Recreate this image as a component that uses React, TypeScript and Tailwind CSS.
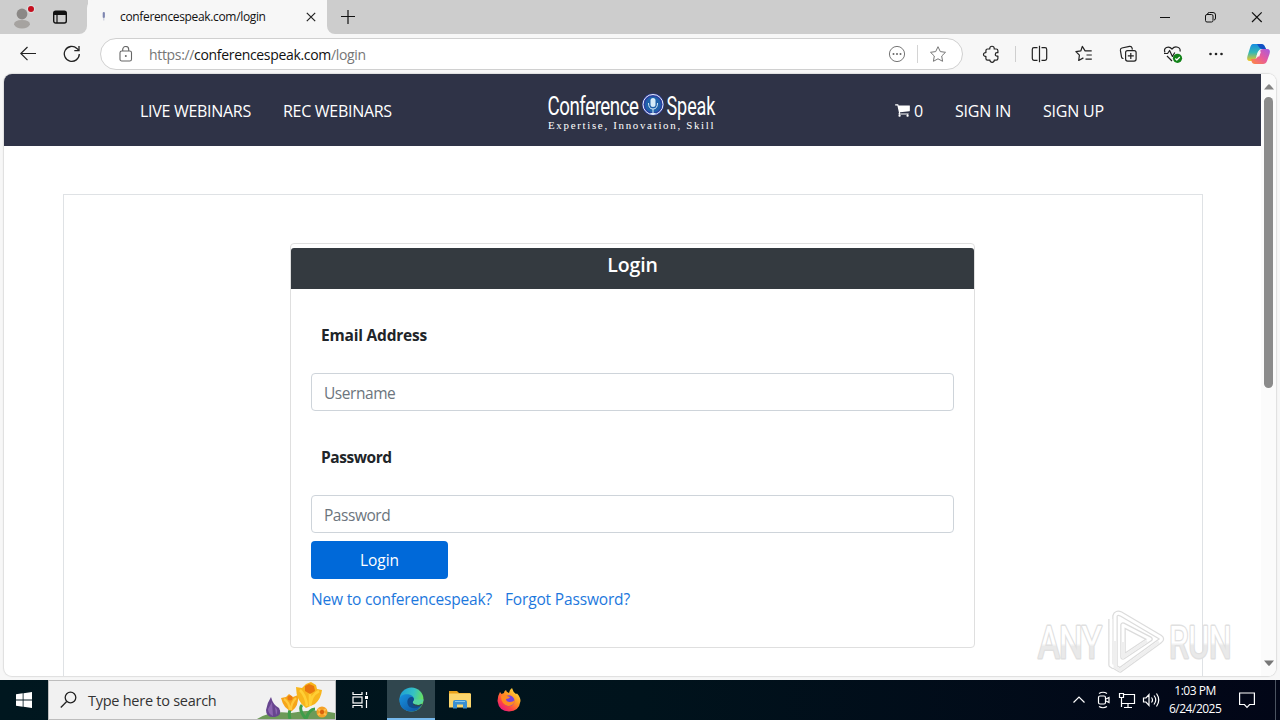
import React from 'react';

/** Browser tab strip with the window controls */
const TabStrip: React.FC = () => (
  <div className="flex h-[34px] shrink-0 bg-[#f7f7f7]">
    <div className="flex w-[87px] items-center rounded-br-lg bg-[#cdcdcd] pl-3">
      <svg className="h-7 w-6" viewBox="0 0 24 28" aria-hidden="true">
        <circle cx="10" cy="11" r="5.4" fill="#8b8886" />
        <path d="M2 21.500q0-4.500 8-4.500t8 4.500q-2 4-8 4t-8-4z" fill="#a6a3a0" />
        <circle cx="19" cy="6" r="4.200" fill="#dcdcdc" />
        <circle cx="19" cy="6" r="3" fill="#c50f1f" />
      </svg>
      <svg className="ml-4 h-4 w-4" viewBox="0 0 16 16" fill="none" stroke="#111" aria-hidden="true">
        <rect x="1.700" y="2.200" width="12.600" height="11.800" rx="2" strokeWidth="1.400" />
        <path d="M2 3h12v3H2z" fill="#111" stroke="none" />
        <path d="M5 5v9" strokeWidth="1.200" />
      </svg>
    </div>
    <div className="w-px bg-[#cdcdcd]" />
    <div className="-mx-px flex w-[241px] items-center rounded-t-lg bg-[#f7f7f7] pl-[14px]">
      <svg className="h-4 w-4" viewBox="0 0 16 16" aria-hidden="true">
        <rect x="1.700" y="3" width="2.200" height="6" rx="1.100" fill="#7e86b0" />
        <path d="M2.800 9v2.500" stroke="#c3c6d8" />
      </svg>
      <span className="ml-[3px] w-[186px] whitespace-nowrap text-[12px] tracking-[-0.34px] text-[#111]">conferencespeak.com/login</span>
      <svg className="h-[10px] w-[10px]" viewBox="0 0 10 10" stroke="#222" strokeWidth="1.200" aria-hidden="true">
        <path d="M.8 .8l8.400 8.400M9.200 .8L.8 9.200" />
      </svg>
    </div>
    <div className="flex flex-1 items-center rounded-bl-lg bg-[#cdcdcd] pl-[13px]">
      <svg className="h-4 w-4" viewBox="0 0 16 16" stroke="#111" strokeWidth="1.200" aria-hidden="true">
        <path d="M1 7.500h14M8 1v14" />
      </svg>
      <svg className="ml-auto h-[14px] w-[110px]" viewBox="0 0 110 14" fill="none" stroke="#111" aria-hidden="true">
        <path d="M3 7.500h10" />
        <rect x="48.500" y="4.500" width="7.500" height="7.500" rx="1.500" />
        <path d="M50.500 4.200q0-1.700 2-1.700h3.500q2.500 0 2.500 2.500v3q0 2-1.500 2" />
        <path d="M95 2.300l9.700 9.700M104.700 2.300L95 12" strokeWidth="1.200" />
      </svg>
      <div className="w-[13px]" />
    </div>
  </div>
);

const Toolbar: React.FC = () => (
  <div className="flex h-10 shrink-0 items-center bg-[#f7f7f7]">
    <svg className="ml-5 h-4 w-4" viewBox="0 0 16 16" fill="none" stroke="#222" strokeWidth="1.200" aria-hidden="true">
      <path d="M16 7.500H.8M7.500 1L.8 7.500l6.700 6.600" />
    </svg>
    <svg className="ml-[27px] h-[18px] w-[18px]" viewBox="0 0 18 18" fill="none" stroke="#222" strokeWidth="1.300" aria-hidden="true">
      <path d="M16.300 9A7.500 7.500 0 1 1 13.900 3.400L16 5.500" />
      <path d="M16 1v4.700h-4.700" />
    </svg>
    <div className="ml-[19px] flex h-8 w-[863px] items-center rounded-full border border-[#d0d0d0] bg-white">
      <svg className="ml-[18px] h-4 w-[14px]" viewBox="0 0 14 16" fill="none" stroke="#666" strokeWidth="1.100" aria-hidden="true">
        <rect x="1" y="5" width="11.500" height="10" rx="1.800" />
        <path d="M3.700 5V3.500a3 3 0 0 1 6 0V5" />
        <circle cx="6.800" cy="10" r="1" fill="#666" stroke="none" />
      </svg>
      <span className="ml-4 w-[700px] whitespace-nowrap text-[14px] tracking-[-0.33px] text-[#767676]">
        https://<span className="text-[#111]">conferencespeak.com</span>/login
      </span>
      <svg className="ml-[39px] h-[18px] w-[60px]" viewBox="0 0 60 18" fill="none" stroke="#777" aria-hidden="true">
        <circle cx="9" cy="9" r="7.600" />
        <g fill="#666" stroke="none">
          <circle cx="5.500" cy="9" r="1" />
          <circle cx="9" cy="9" r="1" />
          <circle cx="12.500" cy="9" r="1" />
        </g>
        <path d="M29.500 0v18" stroke="#d4d4d4" />
        <path d="M50 1.700l2.300 4.900 5.200.700-3.800 3.700.9 5.300-4.600-2.500-4.600 2.500.9-5.300-3.800-3.700 5.200-.700z" strokeLinejoin="round" />
      </svg>
    </div>
    <svg className="ml-[17px] h-6 w-[300px] shrink-0" viewBox="0 0 300 24" fill="none" stroke="#222" strokeWidth="1.200" strokeLinejoin="round" aria-hidden="true">
      {/* Extensions */}
      <path d="M7.500 7h2.300c-.6-3.700 5-3.700 4.400 0h2q1.700 0 1.700 1.700v2h-.9a1.700 1.700 0 0 0 0 3.400h.9v2.400q0 1.700-1.700 1.700h-2c.2 2.800-4.300 2.800-4.200 0H7.500q-1.600 0-1.600-1.700v-2.200c-3.200.6-3.200-4.200 0-3.600v-2Q5.900 7 7.500 7z" />
      <path d="M35.500 4v16" stroke="#cfcfcf" strokeWidth="1" />
      {/* Split screen */}
      <path d="M57.500 5.700H54q-1.700 0-1.700 1.700v9.200q0 1.700 1.700 1.700h3.500M61.500 5.700H65q1.700 0 1.700 1.700v9.200q0 1.700-1.700 1.700h-3.500M59.500 3.800v16.400" />
      {/* Favorites */}
      <path d="M111.700 8.900h-6.600L102.300 4.400l-1.400 4.400-5 .8 3.500 3.600-.7 5.300 4.700-2.600M106.500 13h5.300M105.500 17.200h6.300" />
      {/* Collections */}
      <path d="M143.500 16.500h-.5q-1.300-.3-1.500-1.700l-1.100-6.400q-.2-2 1.500-2.400l7.600-1.600q2-.3 2.500 1.500l.4 1.700" />
      <rect x="145.600" y="8.600" width="10.500" height="10.500" rx="2" />
      <path d="M147.800 13.900h6M150.800 10.900v6" />
      {/* Browser essentials */}
      <path d="M185 10.500c-2-4.500 3.500-7.500 7-3.500 3.500-4 9-1.500 8 2.500M187 14l5 5M184 11.500h3.600l2-3 2.800 6 2.400-4" />
      <circle cx="197.500" cy="16.300" r="4.600" fill="#13831a" stroke="none" />
      <path d="M195.300 16.500l1.500 1.500 3-3" stroke="#fff" />
      <g fill="#222" stroke="none">
        <circle cx="230.500" cy="12" r="1.300" />
        <circle cx="236" cy="12" r="1.300" />
        <circle cx="241.500" cy="12" r="1.300" />
      </g>
      {/* Copilot */}
      <defs>
        <linearGradient id="copilotCool" x1="0" y1="0" x2="0" y2="1">
          <stop offset="0" stopColor="#168de2" />
          <stop offset=".5" stopColor="#35b8b4" />
          <stop offset="1" stopColor="#f2c720" />
        </linearGradient>
        <linearGradient id="copilotWarm" x1="1" y1="0" x2="0" y2="1">
          <stop offset="0" stopColor="#a55ae2" />
          <stop offset=".5" stopColor="#e85b9b" />
          <stop offset="1" stopColor="#ff8a3c" />
        </linearGradient>
      </defs>
      <g stroke="none">
        <path d="M273 2h8q3 0 4 3l1 2h-4q-3 0-4 3l-2 6q-1 3-3 3h-3q-4 0-2.500-5l2.500-8q1-4 3-4z" fill="url(#copilotCool)" />
        <path d="M277 2h4q3 0 4 3l1 2h-4q-2 0-3-2z" fill="#1350c4" />
        <path d="M283 22h-8q-3 0-3.500-3l-.500-2h3q3 0 4-3l2-5q1-2 3-2h4q4 0 2.500 5l-2.500 7q-1 3-4 3z" fill="url(#copilotWarm)" />
        <path d="M278 9.500h3l-1.700 5h-3z" fill="#f7f7f7" />
      </g>
    </svg>
  </div>
);

const Logo: React.FC = () => (
  <svg className="h-11 w-[172px]" viewBox="0 -2 172 44" fill="#fff" role="img" aria-label="Conference Speak">
    <g className="font-['Roboto',sans-serif] text-[25px]">
      <text transform="translate(1.500 24.500) scale(.75 1)" textLength="122">Conference</text>
      <text transform="translate(120.500 24.500) scale(.72 1)" textLength="68">Speak</text>
    </g>
    <circle cx="107" cy="14.500" r="11" fill="#2b3fa0" />
    <circle cx="107" cy="14.500" r="10" fill="none" stroke="#fff" strokeWidth=".9" />
    <circle cx="107" cy="14.500" r="8" fill="#1f62aa" />
    <rect x="104.500" y="8" width="5" height="9" rx="2.500" fill="#d6ecf8" />
    <path d="M102.500 13q0 6 4.500 6t4.500-6M107 19v4M104.500 23.500h5" fill="none" stroke="#d6ecf8" />
    <text transform="translate(2 39) scale(1.150 1)" textLength="144" className="font-['Liberation_Serif',serif] text-[9.500px]">Expertise, Innovation, Skill</text>
  </svg>
);

const SiteNav: React.FC = () => (
  <nav className="flex h-[72px] shrink-0 items-center bg-[#2f3347] pl-[136px] text-[16px] whitespace-nowrap text-white">
    <a className="w-[143px] pt-[2px] tracking-[-0.29px]">LIVE WEBINARS</a>
    <a className="w-[263px] pt-[2px] tracking-[-0.29px]">REC WEBINARS</a>
    <Logo />
    <a className="ml-[177px] flex w-[60px] items-center">
      <svg className="h-4 w-4" viewBox="0 0 1792 1792" fill="currentColor" aria-hidden="true">
        <path d="M640 1536q0 52-38 90t-90 38-90-38-38-90 38-90 90-38 90 38 38 90zm896 0q0 52-38 90t-90 38-90-38-38-90 38-90 90-38 90 38 38 90zm128-1088v512q0 24-16.500 42.500t-40.500 21.500l-1044 122q13 60 13 70 0 16-24 64h920q26 0 45 19t19 45-19 45-45 19h-1024q-26 0-45-19t-19-45q0-11 8-31.500t16-36 21.500-40 15.500-29.500l-177-823h-204q-26 0-45-19t-19-45 19-45 45-19h256q16 0 28.500 6.500t19.500 15.500 13 24.500 8 26 5.500 29.500 4.500 26h1201q26 0 45 19t19 45z" />
      </svg>
      <span className="ml-[3px] pt-[2px]">0</span>
    </a>
    <a className="w-[88px] pt-[2px] tracking-[-0.22px]">SIGN IN</a>
    <a className="pt-[2px] tracking-[-0.22px]">SIGN UP</a>
  </nav>
);

const LoginCard: React.FC = () => (
  <div className="mt-12 ml-[226px] h-[405px] w-[685px] rounded border border-[#dfdfdf] pt-1 whitespace-nowrap">
    <h1 className="h-[41px] rounded-t-[3px] bg-[#343a40] pt-[3px] text-center text-[19.5px] leading-7 font-semibold tracking-[-0.1px] text-white">Login</h1>
    <form className="flex flex-col items-start px-5 text-[15.5px]">
      <label className="mt-[34px] ml-[10px] h-6 leading-6 font-bold tracking-[-0.2px] text-[#212529]">Email Address</label>
      <input className="mt-[26px] h-[38px] w-[643px] rounded border border-[#ced4da] px-3 pt-[2px] tracking-[-0.45px] placeholder:text-[#6c757d]" placeholder="Username" />
      <label className="mt-[34px] ml-[10px] h-6 leading-6 font-bold tracking-[-0.45px] text-[#212529]">Password</label>
      <input className="mt-[26px] h-[38px] w-[643px] rounded border border-[#ced4da] px-3 pt-[2px] tracking-[-0.45px] placeholder:text-[#6c757d]" placeholder="Password" />
      <button type="button" className="mt-2 h-[38px] w-[137px] rounded bg-[#0069d9] pt-px text-white">Login</button>
      <div className="mt-2 flex leading-6 text-[#1d78dd]">
        <a className="w-[194px] tracking-[-0.18px]">New to conferencespeak?</a>
        <a className="tracking-[-0.16px]">Forgot Password?</a>
      </div>
    </form>
  </div>
);

const Watermark: React.FC = () => (
  <svg className="absolute top-[604px] left-[1030px] h-[72px] w-[210px]" viewBox="0 0 210 72" aria-hidden="true">
    <defs>
      <linearGradient id="markFill" x1="0" y1="0" x2="0" y2="1">
        <stop offset=".5" stopColor="#fff" />
        <stop offset=".56" stopColor="#e9e9e9" />
      </linearGradient>
    </defs>
    <g fill="url(#markFill)" stroke="#e0e0e0" strokeWidth="3" strokeLinejoin="round" paintOrder="stroke" className="font-['Roboto',sans-serif] text-[44px]">
      <text transform="translate(8 54) scale(.76 1)" textLength="84">ANY</text>
      <text transform="translate(139 54) scale(.72 1)" textLength="87">RUN</text>
    </g>
    <g fill="none" strokeLinejoin="round">
      <path d="M81 15v46l3 2M91 10l39 23q3 2 0 4L90 66l-5-3V12q1-4 6-2zM93 21v32l27-18z" stroke="#dcdcdc" strokeWidth="5.500" />
      <path d="M81 15v46l3 2M91 10l39 23q3 2 0 4L90 66l-5-3V12q1-4 6-2zM93 21v32l27-18z" stroke="#fff" strokeWidth="3" />
      <path d="M129 38L90 66l-5-3V37M93 38v15l24-16" stroke="#efefef" strokeWidth="3" />
    </g>
  </svg>
);

const Page: React.FC = () => (
  <div className="mx-1 mb-1 flex h-[602px] shrink-0 overflow-hidden rounded-lg bg-white shadow-[0_0_1px_1px_#dedede]">
    <main className="flex w-[1257px] shrink-0 flex-col">
      <SiteNav />
      <div className="mt-12 ml-[59px] h-[482px] w-[1140px] border border-b-0 border-[#dfe2e5]">
        <LoginCard />
      </div>
    </main>
    <div className="flex flex-1 flex-col items-center bg-[#fbfbfb] pt-[10px] pb-[10px]">
      <svg className="h-[6px] w-[10px]" viewBox="0 0 10 6" fill="#858585" aria-hidden="true"><path d="M0 5.500L4 .8q1-1 2 0l4 4.700z" /></svg>
      <div className="mt-[7px] h-[291px] w-[9px] rounded-full bg-[#8b8b8b]" />
      <svg className="mt-auto h-[6px] w-[10px]" viewBox="0 0 10 6" fill="#777" aria-hidden="true"><path d="M0 .5h10L6 5.200q-1 1-2 0z" /></svg>
    </div>
  </div>
);

/** Crocuses in the taskbar search box */
const Flowers: React.FC = () => (
  <svg className="ml-auto h-[38px] w-[78px]" viewBox="0 0 78 38" aria-hidden="true">
    <path d="M0 38q14-9 34-6 24-5 44 0v6z" fill="#6d9a58" />
    <path d="M33 38q-2-7 1-10M49 38q-8-10-4-14M49 38q3-10 9-10" stroke="#3f9d4a" strokeWidth="3" fill="none" />
    <path d="M14 16q2 8 8 11 4 7-4 9-9 1-9-7 1-7 5-13z" fill="#67458f" />
    <path d="M15 21l1 14q-5-2-5-7zM18 26q4 3 1 8" fill="#8b65b0" />
    <path d="M24 17l5-1 3-3 4 3 5-2q1 11-6 16-8-1-11-13z" fill="#f6a51a" />
    <path d="M27 18q5 3 6 11M39 17q-5 5-5 12" stroke="#ffc93d" strokeWidth="2.200" fill="none" />
    <circle cx="33" cy="17" r="2.500" fill="#ed7b12" />
    <g transform="translate(-1 0)">
      <path d="M40 6l6 1 4-4 5-2 5 3 1 4 5 1q-1 9-7 14l-9 4q-10-7-10-21z" fill="#f8b51c" />
      <path d="M44 9q6 6 7 16M63 10q-8 4-9 15M54 7v16" stroke="#ffcf35" strokeWidth="2.600" fill="none" />
      <path d="M49 5l4-2 5 2 1 5-5 3-5-3z" fill="#e8760e" />
    </g>
    <circle cx="65" cy="31" r="5.500" fill="#f4a126" />
    <path d="M61 28l8 6M69 28l-8 6" stroke="#ffbf4d" strokeWidth="2" />
    <circle cx="65" cy="31" r="2.200" fill="#d9620d" />
  </svg>
);

const Taskbar: React.FC = () => (
  <footer className="flex h-10 shrink-0 items-center bg-linear-to-r from-[#00171f] via-[#00131c] to-[#020617] whitespace-nowrap text-white">
    <div className="flex w-12 justify-center">
      <svg className="h-4 w-4" viewBox="0 0 16 16" fill="#fff" aria-hidden="true">
        <path d="M0 2.300L6.700 1.300v6.300H0zM7.500 1.200L16 0v7.600H7.500zM0 8.400h6.700v6.300L0 13.700zM7.500 8.400H16V16l-8.500-1.200z" />
      </svg>
    </div>
    <div className="flex h-10 w-[288px] items-center border border-[#bdbdbd] bg-[#f1f1f1] pl-[11px]">
      <svg className="h-[18px] w-[18px]" viewBox="0 0 18 18" fill="none" stroke="#222" strokeWidth="1.300" aria-hidden="true">
        <circle cx="10.500" cy="6.500" r="5.300" />
        <path d="M6.700 10.500L.8 16.500" />
      </svg>
      <span className="ml-[10px] w-[130px] pt-px text-[14.5px] tracking-[-0.26px] text-[#333]">Type here to search</span>
      <Flowers />
    </div>
    <svg className="ml-4 h-4 w-[18px]" viewBox="0 0 18 16" fill="none" stroke="#fff" strokeWidth="1.200" aria-hidden="true">
      <path d="M1 0v2.500h9V0M1 16v-2.500h9V16M14.500 0v3M14.500 8v8" />
      <rect x="1" y="5" width="9" height="6" />
      <path d="M13 4h3v3h-3z" fill="#fff" stroke="none" />
    </svg>
    <div className="ml-[17px] flex h-10 w-12 items-center justify-center border-b-2 border-[#76b9ed] bg-[#30464e]">
      <svg className="h-[25px] w-[25px]" viewBox="0 0 24 24" aria-hidden="true">
        <defs>
          <linearGradient id="edgeTop" x1="0" y1="0" x2="1" y2=".3">
            <stop offset="0" stopColor="#1a9bd8" />
            <stop offset=".6" stopColor="#35c1c4" />
            <stop offset="1" stopColor="#66df62" />
          </linearGradient>
          <linearGradient id="edgeLow" x1="0" y1="0" x2="1" y2="1">
            <stop offset="0" stopColor="#1792df" />
            <stop offset="1" stopColor="#0e4f9c" />
          </linearGradient>
        </defs>
        <circle cx="12" cy="12" r="11.500" fill="url(#edgeTop)" />
        <path d="M.5 12C.5 5.500 14 5 14.500 12q0 1-1.200 2.500c-.8 2.500 5.700 4 9 1.500Q19 23.500 12 23.500.5 23 .5 12z" fill="url(#edgeLow)" />
        <path d="M8 14c0-3 2-4.500 4-4.500 2.500 0 3 2.500 1.300 5-.8 2.500 5.700 4 9 1.500-2 5-14.300 7.500-14.300-2z" fill="#114a8b" />
        <path d="M14.500 12q0 1-1.200 2.500c-.5 2 4.500 3 7.500 1.500 2-1 2.700-2.500 2.700-4z" fill="#58d4a0" />
        <path d="M13.300 14.500c-.6 2.500 5.700 4 9 1.500l-.7 1.700q-5 2-8-.5z" fill="#30464e" />
      </svg>
    </div>
    <svg className="ml-[14px] h-[20px] w-[22px]" viewBox="0 0 22 20" aria-hidden="true">
      <path d="M0 1h8l2 2h11v4H0z" fill="#e9a21b" />
      <path d="M0 3.500h22v14H0z" fill="#fbd56c" />
      <path d="M4 18.500v-6.500q0-2 2-2h10q2 0 2 2v6.500h-4v-4H8v4z" fill="#3a8fd0" />
      <path d="M6 11.500h10" stroke="#85c7ed" />
    </svg>
    <svg className="ml-[26px] h-6 w-6" viewBox="0 0 24 24" aria-hidden="true">
      <defs>
        <linearGradient id="foxFire" x1="1" y1="0" x2=".2" y2="1">
          <stop offset="0" stopColor="#fff04a" />
          <stop offset=".45" stopColor="#ff9a22" />
          <stop offset=".75" stopColor="#ff4245" />
          <stop offset="1" stopColor="#e31587" />
        </linearGradient>
      </defs>
      <path d="M3 4l1.500 2L7 5q0-2 2-3 0 2 3 3Q12 2 15 0q1 4 4 6l1-.5Q23.500 9 23.500 13 22 23.500 12 23.500T.5 13Q.5 8 3 4z" fill="url(#foxFire)" />
      <circle cx="12" cy="12.800" r="5.500" fill="#7743dc" />
      <path d="M4 8q3-2 6 0l3 1q-1 2-4 2 0 3 4 3 3 0 5-2-1 6-7 6-7-2-7-10z" fill="#ff8a20" />
    </svg>
    <svg className="ml-auto h-6 w-[92px]" viewBox="0 0 92 24" fill="none" stroke="#fff" strokeWidth="1.200" aria-hidden="true">
      <path d="M4.500 14.500L10 9l5.500 5.500" />
      <rect x="29.500" y="8" width="7" height="8" rx="1.500" />
      <path d="M37 11l3-1.500v5L37 13M30 5.500q4-2.500 8 0M30 18.500q4 2.500 8 0" />
      <path d="M54 6.500h11.500v9H52.500v-4M59 15.500v3.500M55 19.500h8M50.500 5.500h4v4h-4zM52.500 9.500V19" />
      <path d="M74.500 10H77L80 6.500v11L77 14h-2.500zM82.500 9.500q2 2.500 0 5M85 7.500q3.500 4.500 0 9M87.500 5.500q4.500 6.500 0 13" />
    </svg>
    <div className="ml-2 w-[52px] text-center text-[12px] leading-[18px] tracking-[-0.5px]">
      <div>1:03 PM</div>
      <div>6/24/2025</div>
    </div>
    <svg className="ml-[18px] h-[18px] w-4" viewBox="0 0 16 18" fill="none" stroke="#fff" strokeWidth="1.200" aria-hidden="true">
      <path d="M.6 2h14.800v11.500h-4.800L8 16.300l-2.600-2.800H.6z" />
    </svg>
    <div className="ml-5 h-10 w-[5px] border-l border-[#4b5360]" />
  </footer>
);

export default function App() {
  return (
    <div className="relative flex h-[720px] w-[1280px] flex-col overflow-hidden bg-[#f7f7f7] font-['Open_Sans','Noto_Sans',sans-serif]">
      <TabStrip />
      <Toolbar />
      <Page />
      <Taskbar />
      <Watermark />
    </div>
  );
}
